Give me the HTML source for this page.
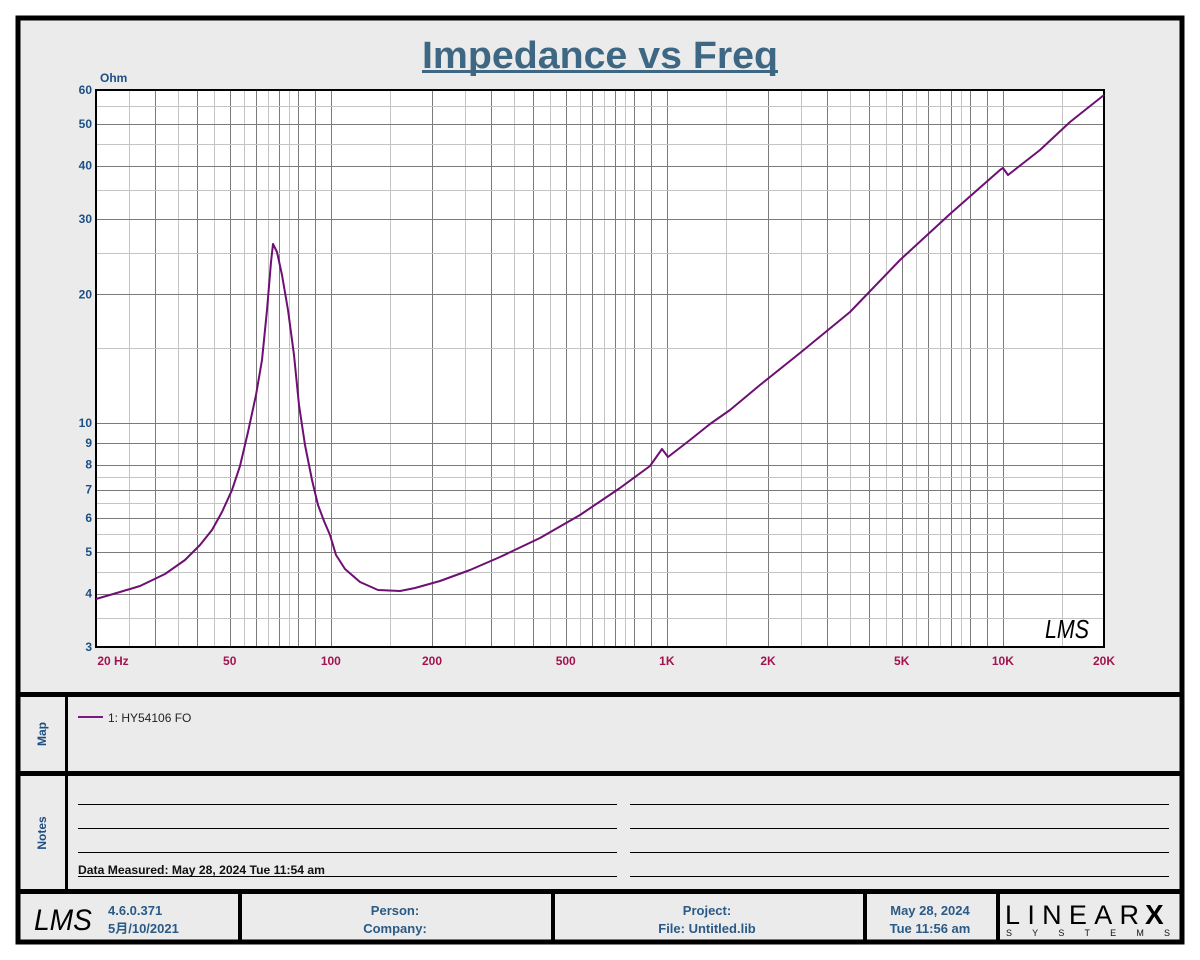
<!DOCTYPE html>
<html><head><meta charset="utf-8"><style>
html,body{margin:0;padding:0;background:#fff;}
svg{display:block;}
text{font-family:"Liberation Sans","Noto Sans CJK SC",sans-serif;}
</style></head><body>
<svg id="s" width="1200" height="960" viewBox="0 0 1200 960" xmlns="http://www.w3.org/2000/svg">
<rect x="0" y="0" width="1200" height="960" fill="#fff"/>
<rect x="18" y="18" width="1164" height="924" fill="#ebebeb" stroke="#000" stroke-width="5"/>
<text x="600" y="68" text-anchor="middle" font-size="38" font-weight="bold" fill="#3e6783" textLength="356" lengthAdjust="spacingAndGlyphs">Impedance vs Freq</text>
<rect x="422" y="70" width="356" height="3" fill="#3e6783"/>
<text x="100" y="82" font-size="12" font-weight="bold" fill="#1d4f82">Ohm</text>
<rect x="96" y="90" width="1008" height="557" fill="#fff"/>
<g id="grid"></g>
<rect x="96" y="90" width="1008" height="557" fill="none" stroke="#000" stroke-width="2"/>
<g id="ylab" font-size="12" font-weight="bold" fill="#1d4f82" text-anchor="end"></g>
<g id="xlab" font-size="12" font-weight="bold" fill="#a3134f" text-anchor="middle"></g>
<polyline fill="none" stroke="#6d0f73" stroke-width="2" stroke-linejoin="round" points="96,599 120,592 140,586 165,574 185,560 200,545 212,530 222,512 232,490 240,466 248,432 256,395 262,360 267,310 271,262 273,244 277,252 282,275 288,310 294,355 299,405 305,445 312,480 318,505 324,521 330,535 336,555 345,569 360,582 378,590 400,591 415,588 440,581 470,570 500,557 540,538 580,515 620,488 650,466 662,449 668,457 690,440 710,424 730,410 760,385 800,353 850,312 900,260 950,214 1000,170 1003,168 1008,175 1040,150 1070,122 1104,95"/>
<text x="1045" y="638" font-size="26" font-style="italic" fill="#000" font-family="Liberation Serif,serif" textLength="44" lengthAdjust="spacingAndGlyphs">LMS</text>
<rect x="18" y="692" width="1164" height="5" fill="#000"/>
<rect x="18" y="771" width="1164" height="5" fill="#000"/>
<rect x="18" y="889" width="1164" height="5" fill="#000"/>
<rect x="65" y="697" width="3" height="192" fill="#000"/>
<text transform="translate(46,734) rotate(-90)" text-anchor="middle" font-size="12" font-weight="bold" fill="#1d4f82">Map</text>
<text transform="translate(46,833) rotate(-90)" text-anchor="middle" font-size="12" font-weight="bold" fill="#1d4f82">Notes</text>
<line x1="78" y1="717" x2="103" y2="717" stroke="#7a1a80" stroke-width="2"/>
<text x="108" y="722" font-size="12" fill="#222">1: HY54106  FO</text>
<g stroke="#000" stroke-width="1">
<line x1="78" y1="804.5" x2="617" y2="804.5"/><line x1="630" y1="804.5" x2="1169" y2="804.5"/>
<line x1="78" y1="828.5" x2="617" y2="828.5"/><line x1="630" y1="828.5" x2="1169" y2="828.5"/>
<line x1="78" y1="852.5" x2="617" y2="852.5"/><line x1="630" y1="852.5" x2="1169" y2="852.5"/>
<line x1="78" y1="876.5" x2="617" y2="876.5"/><line x1="630" y1="876.5" x2="1169" y2="876.5"/>
</g>
<text x="78" y="874" font-size="11.5" font-weight="bold" fill="#111" textLength="247" lengthAdjust="spacingAndGlyphs">Data Measured: May 28, 2024  Tue 11:54 am</text>
<rect x="238" y="894" width="4" height="48" fill="#000"/>
<rect x="551" y="894" width="4" height="48" fill="#000"/>
<rect x="863" y="894" width="4" height="48" fill="#000"/>
<rect x="996" y="894" width="4" height="48" fill="#000"/>
<text x="34" y="930" font-size="30" font-style="italic" fill="#000" font-family="Liberation Serif,serif" textLength="58" lengthAdjust="spacingAndGlyphs">LMS</text>
<g font-size="13" font-weight="bold" fill="#2a5a86">
<text x="108" y="915">4.6.0.371</text>
<text x="108" y="933">5月/10/2021</text>
<g text-anchor="middle">
<text x="395" y="915">Person:</text><text x="395" y="933">Company:</text>
<text x="707" y="915">Project:</text><text x="707" y="933">File: Untitled.lib</text>
<text x="930" y="915">May 28, 2024</text><text x="930" y="933">Tue 11:56 am</text>
</g></g>
<text x="1005" y="924" font-size="27" font-family="Liberation Serif,serif" fill="#000" textLength="134" lengthAdjust="spacing">LINEAR</text>
<text x="1145" y="924" font-size="28" font-weight="bold" font-family="Liberation Sans,sans-serif" fill="#000">X</text>
<text x="1006" y="936" font-size="9" fill="#111" textLength="164" lengthAdjust="spacing">SYSTEMS</text>
</svg>
<script>
(function(){
var NS="http://www.w3.org/2000/svg";
var g=document.getElementById('grid'),yl=document.getElementById('ylab'),xl=document.getElementById('xlab');
function X(f){return 96+336*Math.log10(f/20);}
function Y(o){return 647-428*Math.log10(o/3);}
function ln(x1,y1,x2,y2,c){var l=document.createElementNS(NS,'line');l.setAttribute('x1',x1);l.setAttribute('y1',y1);l.setAttribute('x2',x2);l.setAttribute('y2',y2);l.setAttribute('stroke',c);l.setAttribute('stroke-width',1);g.appendChild(l);}
function tx(p,x,y,s){var t=document.createElementNS(NS,'text');t.setAttribute('x',x);t.setAttribute('y',y);t.textContent=s;p.appendChild(t);}
var dark="#7a7a7a",light="#c4c4c4";
[10,100,1000,10000].forEach(function(d){
 for(var m=1;m<10;m++){var f=m*d;if(f>20&&f<20000){var x=Math.round(X(f))+0.5;ln(x,90,x,647,dark);}
  if(m<=7){var fh=(m+0.5)*d;if(fh>20&&fh<20000){var xh=Math.round(X(fh))+0.5;ln(xh,90,xh,647,light);}}}
});
[1,10].forEach(function(d){
 for(var m=1;m<10;m++){var o=m*d;if(o>3&&o<60){var y=Math.round(Y(o))+0.5;ln(96,y,1104,y,dark);}
  if(m<=7){var oh=(m+0.5)*d;if(oh>3&&oh<60){var yh=Math.round(Y(oh))+0.5;ln(96,yh,1104,yh,light);}}}
});
[60,50,40,30,20,10,9,8,7,6,5,4,3].forEach(function(o){tx(yl,92,Y(o)+4,o);});
[[20,"20  Hz",113],[50,"50"],[100,"100"],[200,"200"],[500,"500"],[1000,"1K"],[2000,"2K"],[5000,"5K"],[10000,"10K"],[20000,"20K"]].forEach(function(a){tx(xl,a[2]||X(a[0]),665,a[1]);});
})();
</script>
</body></html>
